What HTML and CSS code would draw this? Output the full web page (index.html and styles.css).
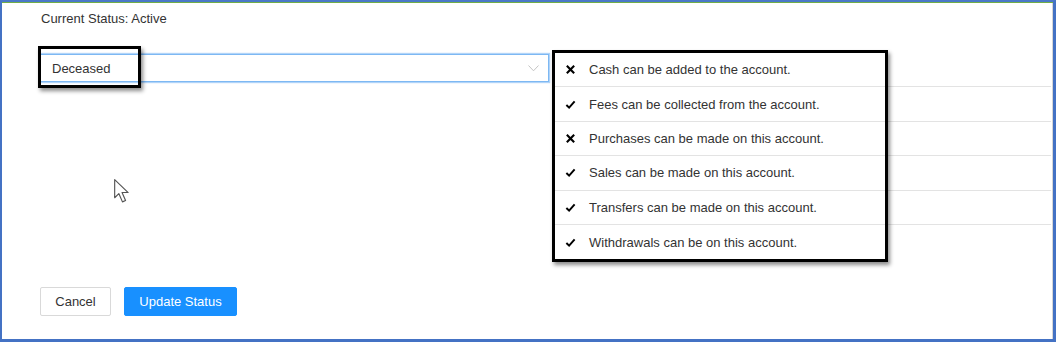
FILE: index.html
```html
<!DOCTYPE html>
<html lang="en">
<head>
    <meta charset="UTF-8">
    <title>Account Status</title>
    <link rel="stylesheet" href="styles.css">
</head>
<body>
    <div class="frame">
        <p class="status">Current Status: Active</p>

        <div class="main-row">
            <!-- Status dropdown -->
            <div class="select">
                <span class="select-value">Deceased</span>
                <svg class="chevron" width="11" height="7" viewBox="0 0 11 7"><path d="M0.5 0.5 L5.5 5.8 L10.5 0.5" fill="none" stroke="#c4c4c4" stroke-width="1"/></svg>
                <div class="callout callout-select"></div>
            </div>

            <!-- Permissions list -->
            <ul class="rules">
                <li><svg class="icon" viewBox="0 0 12 12"><path d="M2 2 L10 10 M10 2 L2 10" stroke="#000" stroke-width="2.3" fill="none"/></svg>Cash can be added to the account.</li>
                <li><svg class="icon" viewBox="0 0 12 12"><path d="M1.5 6.5 L4.5 9.5 L10.5 2.5" stroke="#000" stroke-width="2.1" fill="none"/></svg>Fees can be collected from the account.</li>
                <li><svg class="icon" viewBox="0 0 12 12"><path d="M2 2 L10 10 M10 2 L2 10" stroke="#000" stroke-width="2.3" fill="none"/></svg>Purchases can be made on this account.</li>
                <li><svg class="icon" viewBox="0 0 12 12"><path d="M1.5 6.5 L4.5 9.5 L10.5 2.5" stroke="#000" stroke-width="2.1" fill="none"/></svg>Sales can be made on this account.</li>
                <li><svg class="icon" viewBox="0 0 12 12"><path d="M1.5 6.5 L4.5 9.5 L10.5 2.5" stroke="#000" stroke-width="2.1" fill="none"/></svg>Transfers can be made on this account.</li>
                <li><svg class="icon" viewBox="0 0 12 12"><path d="M1.5 6.5 L4.5 9.5 L10.5 2.5" stroke="#000" stroke-width="2.1" fill="none"/></svg>Withdrawals can be on this account.</li>
                <div class="callout callout-list"></div>
            </ul>
        </div>

        <!-- Mouse pointer -->
        <svg class="pointer" width="21" height="27" viewBox="0 0 20 26">
            <path d="M1.5 1.5 L1.5 19 L5.5 15 L9 23 L12 21.7 L8.6 14 L14.5 14 Z" fill="#fff" stroke="#555" stroke-width="1.1" stroke-linejoin="round"/>
        </svg>

        <div class="actions">
            <button class="btn btn-cancel">Cancel</button>
            <button class="btn btn-primary">Update Status</button>
        </div>
    </div>
</body>
</html>
```

FILE: styles.css
```css
/* General */
* { margin: 0; padding: 0; box-sizing: border-box; }
body {
    font-family: "Liberation Sans", Arial, sans-serif;
    font-size: 13px;
    color: #333;
    background: #fff;
}

/* Screenshot frame */
.frame {
    position: relative;
    width: 1056px;
    height: 342px;
    border-left: 2px solid #4472c4;
    border-top: 2px solid #4a78c8;
    border-right: 3px solid #4472c4;
    border-bottom: 3px solid #4472c4;
    box-shadow: inset 0 1px 0 #70ad47, inset -1px 0 0 #d6d6d6;
    padding: 9px 2px 0 38px;
}

.status {
    line-height: 16px;
    padding-left: 1px;
}

/* Main row */
.main-row {
    display: flex;
    gap: 3px;
    margin-top: 23px;
}

.select {
    position: relative;
    width: 509px;
    height: 28px;
    margin-top: 4px;
    border: 1px solid #7db8f3;
    box-shadow: 0 0 1px 1px rgba(125, 184, 243, 0.6);
    display: flex;
    align-items: center;
    justify-content: space-between;
    padding: 0 9px 0 11px;
}

.chevron { margin-top: 1px; }

/* Annotation boxes */
.callout {
    position: absolute;
    border: 3px solid #000;
    box-shadow: 2px 3px 4px rgba(0, 0, 0, 0.45);
    pointer-events: none;
}

.callout-select {
    left: -3px;
    top: -9px;
    width: 103px;
    height: 42px;
}

.callout-list {
    left: 0;
    top: 0;
    width: 336px;
    height: 212px;
}

/* Rules list */
.rules {
    position: relative;
    list-style: none;
    width: 499px;
    padding-top: 3px;
}

.rules li {
    height: 34.4px;
    display: flex;
    align-items: center;
    padding-left: 13px;
    border-bottom: 1px solid #e3e3e3;
}

.rules li:last-of-type {
    border-bottom: none;
}

.icon {
    width: 11px;
    height: 11px;
    margin-right: 13px;
}

/* Pointer */
.pointer {
    position: absolute;
    left: 111px;
    top: 176px;
}

/* Buttons */
.actions {
    display: flex;
    gap: 13px;
    margin-top: 28px;
}

.btn {
    font-family: "Liberation Sans", Arial, sans-serif;
    font-size: 13px;
    height: 29px;
    border-radius: 2px;
    cursor: pointer;
}

.btn-cancel {
    width: 71px;
    background: #fff;
    border: 1px solid #d9d9d9;
    color: #333;
}

.btn-primary {
    width: 113px;
    background: #1890ff;
    border: 1px solid #1890ff;
    color: #fff;
}
```
